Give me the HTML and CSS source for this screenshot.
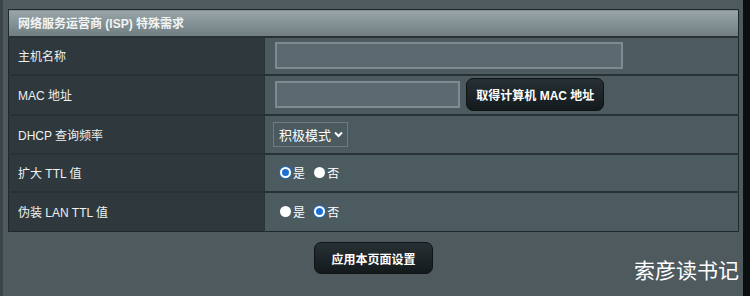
FILE: index.html
```html
<!DOCTYPE html>
<html lang="zh-CN">
<head>
    <meta charset="UTF-8">
    <title>ISP 特殊需求</title>
    <link rel="stylesheet" href="styles.css">
</head>
<body>
    <div class="page">
        <div class="panel">
            <table class="form-table">
                <thead>
                    <tr><th colspan="2">网络服务运营商 (ISP) 特殊需求</th></tr>
                </thead>
                <tbody>
                    <tr class="row-a">
                        <td class="label">主机名称</td>
                        <td class="value"><input class="text-input wide" type="text"></td>
                    </tr>
                    <tr class="row-b">
                        <td class="label">MAC 地址</td>
                        <td class="value">
                            <input class="text-input narrow" type="text">
                            <button class="dark-btn mac-btn">取得计算机 MAC 地址</button>
                        </td>
                    </tr>
                    <tr class="row-c">
                        <td class="label">DHCP 查询频率</td>
                        <td class="value">
                            <div class="select">积极模式
                                <svg width="9" height="7" viewBox="0 0 9 7"><path d="M1 1.5 L4.5 5 L8 1.5" fill="none" stroke="#fff" stroke-width="2"/></svg>
                            </div>
                        </td>
                    </tr>
                    <tr class="row-d">
                        <td class="label">扩大 TTL 值</td>
                        <td class="value">
                            <span class="radio on"></span><span class="opt">是</span>
                            <span class="radio"></span><span class="opt">否</span>
                        </td>
                    </tr>
                    <tr class="row-e">
                        <td class="label">伪装 LAN TTL 值</td>
                        <td class="value">
                            <span class="radio"></span><span class="opt">是</span>
                            <span class="radio on"></span><span class="opt">否</span>
                        </td>
                    </tr>
                </tbody>
            </table>
            <div class="footer">
                <button class="dark-btn apply-btn">应用本页面设置</button>
                <span class="watermark">索彦读书记</span>
            </div>
        </div>
        <div class="edge"></div>
    </div>
</body>
</html>
```

FILE: styles.css
```css
* {
    margin: 0;
    padding: 0;
    box-sizing: border-box;
}
body {
    width: 750px;
    height: 296px;
    overflow: hidden;
    background: #4e5a5e;
    font-family: "Liberation Sans", "Noto Sans CJK SC", sans-serif;
    color: #fff;
}
.page {
    display: flex;
    height: 296px;
    border-left: 3px solid #3b4549;
}
.panel {
    flex: 1;
    padding: 9px 0 0 5px;
}
.edge {
    width: 7px;
    background: #0c0f10;
}

.form-table {
    width: 731px;
    border-collapse: collapse;
    border: 1px solid #1f282b;
}
.form-table th {
    height: 27px;
    text-align: left;
    padding-left: 9px;
    font-size: 12px;
    font-weight: bold;
    color: #f2f4f4;
    background: linear-gradient(#98a6a9, #6f7d81);
    border-bottom: 1px solid #2b3437;
}
.form-table td {
    border-top: 2px solid #283235;
    font-size: 12px;
}
.label {
    width: 256px;
    background: #2f393d;
    padding-left: 9px;
    color: #eef1f1;
    border-right: 1px solid #2a3336;
}
.value {
    background: #4c5b60;
    padding-left: 10px;
}
.row-a td { height: 38px; }
.row-b td { height: 40px; }
.row-c td { height: 39px; }
.row-d td { height: 38px; }
.row-e td { height: 40px; }

.text-input {
    display: inline-block;
    vertical-align: middle;
    height: 27px;
    background: #5a6a70;
    border: 2px solid #7c8c91;
    outline: none;
}
.wide { width: 348px; }
.narrow { width: 185px; }

.dark-btn {
    display: inline-block;
    vertical-align: middle;
    background: linear-gradient(#273034, #141a1c);
    color: #fff;
    border: 1px solid #0f1416;
    border-radius: 7px;
    font-family: "Liberation Sans", "Noto Sans CJK SC", sans-serif;
    font-weight: bold;
    font-size: 12px;
}
.mac-btn {
    height: 33px;
    padding: 0 9px;
    margin-left: 3px;
}

.select {
    display: inline-flex;
    align-items: center;
    gap: 3px;
    height: 25px;
    padding: 0 4px 0 5px;
    margin-left: -2px;
    border: 1px solid #6c7c81;
    background: #4b5a5f;
    font-size: 13px;
}

.radio {
    display: inline-block;
    vertical-align: middle;
    width: 11px;
    height: 11px;
    border-radius: 50%;
    background: #fff;
    margin-left: 6px;
}
.radio:first-child {
    margin-left: 5px;
}
.radio.on {
    background: #1f6fd0;
    border: 2px solid #fff;
    box-shadow: 0 0 0 1px #1f6fd0;
}
.opt {
    vertical-align: middle;
    margin-left: 2px;
    font-size: 12px;
}

.footer {
    display: flex;
    align-items: flex-start;
    position: relative;
    padding-top: 10px;
    padding-left: 306px;
}
.apply-btn {
    width: 119px;
    height: 32px;
}
.watermark {
    position: absolute;
    right: 4px;
    top: 22px;
    font-size: 21px;
    color: #fff;
    font-family: "Noto Sans CJK SC", sans-serif;
}
```
